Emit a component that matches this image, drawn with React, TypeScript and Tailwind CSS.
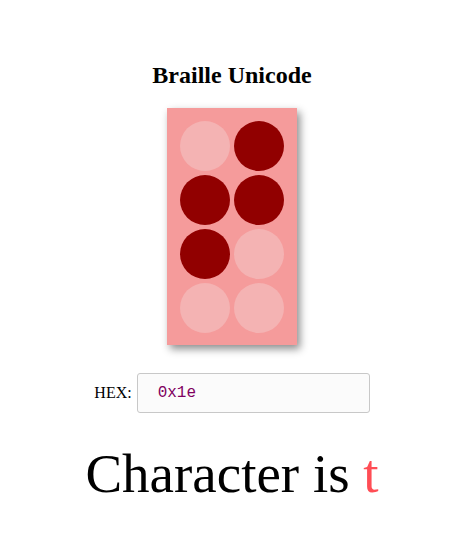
const dots = [false, true, true, true, true, false, false, false];

export default function App() {
  return (
    <div className="flex min-h-[536px] w-[464px] flex-col items-center bg-white" style={{ fontFamily: '"Liberation Serif", serif' }}>
      <h3 className="mt-[63px] text-[24px] leading-[24px] font-bold text-black">Braille Unicode</h3>
      <div className="mt-[21px] grid w-[130px] grid-cols-2 gap-[4px] bg-[#f59b9b] pt-[13px] pr-[13px] pb-[12px] pl-[13px] shadow-[3px_4px_8px_rgba(0,0,0,0.45)]">
        {dots.map((on, i) => (
          <div key={i} className={`h-[50px] w-[50px] rounded-full ${on ? "bg-[#910000]" : "bg-[#f4b3b3]"}`} />
        ))}
      </div>
      <div className="mt-[28px] flex items-center gap-[5px]">
        <label className="text-[16px] text-black">HEX:</label>
        <input
          readOnly
          value="0x1e"
          className="h-[40px] w-[233px] rounded-[3px] border border-[#c8c8c8] bg-[#fbfbfb] px-[20px] text-[16px] text-[#800060] outline-none"
          style={{ fontFamily: '"Liberation Mono", monospace' }}
        />
      </div>
      <div className="mt-[29px] text-[55px] leading-[64px] text-black">
        Character is <span className="text-[#ff4d55]">t</span>
      </div>
    </div>
  );
}
